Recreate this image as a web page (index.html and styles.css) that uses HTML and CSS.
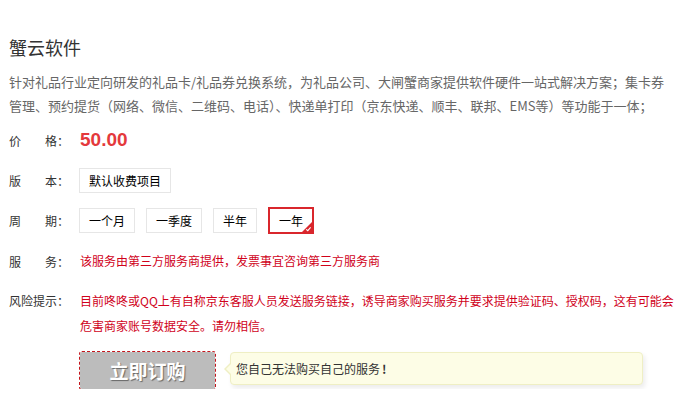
FILE: index.html
```
<!DOCTYPE html>
<html lang="zh-CN">
<head>
    <meta charset="UTF-8">
    <meta name="viewport" content="width=device-width, initial-scale=1.0">
    <title>蟹云软件</title>
    <link rel="stylesheet" href="styles.css">
</head>
<body>
    <div class="product">
        <h1 class="product-name">蟹云软件</h1>
        <p class="product-desc">针对礼品行业定向研发的礼品卡/礼品券兑换系统，为礼品公司、大闸蟹商家提供软件硬件一站式解决方案；集卡券管理、预约提货（网络、微信、二维码、电话）、快递单打印（京东快递、顺丰、联邦、EMS等）等功能于一体；</p>

        <div class="row">
            <div class="label"><span class="label-name">价格</span>：</div>
            <div class="price">50.00</div>
        </div>

        <div class="row">
            <div class="label"><span class="label-name">版本</span>：</div>
            <div class="options">
                <span class="option">默认收费项目</span>
            </div>
        </div>

        <div class="row">
            <div class="label"><span class="label-name">周期</span>：</div>
            <div class="options">
                <span class="option">一个月</span>
                <span class="option">一季度</span>
                <span class="option">半年</span>
                <span class="option selected">一年<i class="tick"><svg width="10" height="10" viewBox="0 0 10 10"><path d="M10 0 L10 10 L0 10 Z" fill="#d9262c"/><path d="M4.2 7.3 L5.8 8.7 L8.6 5.4" stroke="#fff" stroke-width="1.1" fill="none"/></svg></i></span>
            </div>
        </div>

        <div class="row">
            <div class="label"><span class="label-name">服务</span>：</div>
            <div class="notice">该服务由第三方服务商提供，发票事宜咨询第三方服务商</div>
        </div>

        <div class="row row-top">
            <div class="label"><span class="label-name">风险提示</span>：</div>
            <div class="notice notice-multi">目前咚咚或QQ上有自称京东客服人员发送服务链接，诱导商家购买服务并要求提供验证码、授权码，这有可能会危害商家账号数据安全。请勿相信。</div>
        </div>

        <div class="buy-row">
            <button class="buy-btn">立即订购</button>
            <div class="tip">您自己无法购买自己的服务<b>!</b></div>
        </div>
    </div>
</body>
</html>
```

FILE: styles.css
```
body {
    margin: 0;
    background-color: #fff;
    font-family: "Noto Sans CJK SC", "Liberation Sans", sans-serif;
    font-size: 12px;
    color: #333;
}

.product {
    padding: 35px 6px 0 9px;
}

.product-name {
    margin: 0 0 11px;
    font-size: 18px;
    font-weight: normal;
    line-height: 24px;
    color: #333;
}

.product-desc {
    margin: 0 9px 9px 0;
    font-size: 13px;
    line-height: 24px;
    color: #666;
}

.row {
    display: flex;
    align-items: center;
    min-height: 26px;
    margin-bottom: 14px;
}

.row-top {
    align-items: flex-start;
    margin-bottom: 13px;
}

.label {
    width: 70px;
    flex-shrink: 0;
    line-height: 25px;
    color: #333;
}

.label-name {
    display: inline-block;
    width: 48px;
    text-align: justify;
    text-align-last: justify;
}

.price {
    padding-left: 1px;
    font-family: "Liberation Sans", Arial, sans-serif;
    font-size: 19px;
    font-weight: bold;
    color: #e4393c;
}

.options {
    display: flex;
    align-items: center;
    gap: 11px;
}

.option {
    position: relative;
    padding: 0 9px;
    line-height: 23px;
    border: 1px solid #e6e6e6;
    color: #000;
}

.option.selected {
    line-height: 23px;
    border: 2px solid #d9262c;
}

.tick {
    position: absolute;
    right: 0;
    bottom: 0;
    width: 10px;
    height: 10px;
    line-height: 0;
}

.notice {
    padding-left: 1px;
    line-height: 26px;
    color: #d0021b;
}

.notice-multi {
    line-height: 25px;
}

.buy-row {
    display: flex;
    align-items: flex-start;
    gap: 15px;
    padding-left: 71px;
}

.buy-btn {
    width: 135px;
    height: 37px;
    margin-top: 1px;
    border: none;
    border-radius: 2px;
    outline: 1px dashed #c4161c;
    outline-offset: 0;
    background-color: #bcbcbc;
    font-family: "Noto Sans CJK SC", sans-serif;
    font-size: 19px;
    font-weight: bold;
    color: #fff;
    text-shadow: 1px 1px 1px rgba(0, 0, 0, 0.45);
    cursor: pointer;
}

.tip {
    position: relative;
    width: 398px;
    padding: 0 8px 0 5px;
    margin-top: 1px;
    line-height: 31px;
    background-color: #fdfde6;
    border: 1px solid #efefc4;
    border-radius: 4px;
    box-shadow: 2px 3px 5px rgba(0, 0, 0, 0.08);
    color: #333;
}

.tip b {
    margin-left: 2px;
}

.tip::before {
    content: "";
    position: absolute;
    left: -7px;
    top: 9px;
    border-style: solid;
    border-width: 7px 7px 7px 0;
    border-color: transparent #efefc4 transparent transparent;
}

.tip::after {
    content: "";
    position: absolute;
    left: -5px;
    top: 10px;
    border-style: solid;
    border-width: 6px 6px 6px 0;
    border-color: transparent #fdfde6 transparent transparent;
}
```
